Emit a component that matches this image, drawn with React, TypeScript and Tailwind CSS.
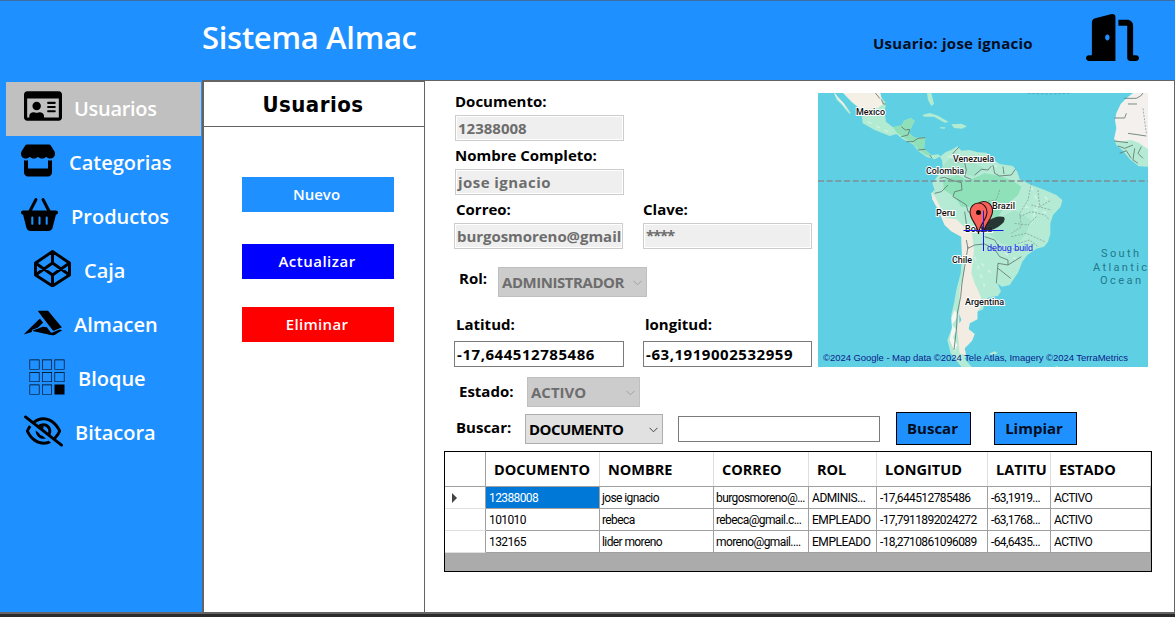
import type { ReactNode } from "react";
import { FaAccusoft, FaBuromobelexperte, FaRegIdCard } from "react-icons/fa";
import { FaBasketShopping, FaDoorOpen, FaRegEyeSlash, FaStore } from "react-icons/fa6";

const ui = "font-['Open_Sans','Noto_Sans',sans-serif] font-bold";

function CodepenCube({ className }: { className: string }) {
  return (
    <svg viewBox="0 0 37 37" className={className} fill="none" stroke="currentColor" strokeWidth="2.9" strokeLinejoin="round">
      <path d="M18.500 1.500 35.500 13V25L18.500 36 1.500 25V13ZM1.500 13 18.500 25 35.500 13M1.500 25 18.500 13 35.500 25M18.500 1.500V13M18.500 25V36" />
    </svg>
  );
}

function NavItem({ label, icon, active, pad, gap, track = "" }: { label: string; icon: ReactNode; active?: boolean; pad: string; gap: string; track?: string }) {
  return (
    <button className={`ml-[6px] flex h-[54px] w-[195px] items-center ${pad} ${gap} ${active ? "bg-[#c0c0c0]" : ""}`}>
      <span className="shrink-0 text-black">{icon}</span>
      <span className={`text-[20px] leading-[28px] font-semibold whitespace-nowrap text-white ${track}`}>{label}</span>
    </button>
  );
}

function Label({ children, className = "" }: { children: ReactNode; className?: string }) {
  return <label className={`block text-[15px] leading-[20px] whitespace-nowrap text-black ${className}`}>{children}</label>;
}

function Box({ children, disabled, className = "" }: { children?: ReactNode; disabled?: boolean; className?: string }) {
  return (
    <div className={`flex h-[26px] items-center overflow-hidden border whitespace-nowrap ${disabled ? "border-[#cccccc] bg-[#efefef] text-[#6d6d6d] shadow-[inset_0_0_0_1px_#fff]" : "border-[#7a7a7a] bg-white text-black"} pl-[2px] text-[15px] leading-[20px] ${className}`}>
      {children}
    </div>
  );
}

function Select({ children, disabled, className = "" }: { children: ReactNode; disabled?: boolean; className?: string }) {
  return (
    <div className={`flex h-[30px] items-center justify-between border pr-[4px] pl-[3px] text-[15px] whitespace-nowrap ${disabled ? "border-[#bfbfbf] bg-[#cccccc] text-[#6d6d6d]" : "border-[#adadad] bg-[#e1e1e1] text-black"} ${className}`}>
      <span>{children}</span>
      <svg width="9" height="6" viewBox="0 0 9 6" fill="none" stroke={disabled ? "#a0a0a0" : "#444"} className="mt-[2px]">
        <path d="M.5 .8 4.5 4.8 8.5 .8" />
      </svg>
    </div>
  );
}

const halo = { paintOrder: "stroke" as const };

function Place({ x, y, w, children }: { x: number; y: number; w: number; children: string }) {
  return (
    <text x={x} y={y} textLength={w} lengthAdjust="spacingAndGlyphs" style={halo} className="fill-[#111] stroke-white stroke-[2px] font-[Roboto,sans-serif] text-[9.5px] font-medium">
      {children}
    </text>
  );
}

function WorldMap() {
  return (
    <svg width="330" height="274" viewBox="0 0 330 274" className="block shrink-0 bg-[#5fd0e3] font-normal">
      <g transform="translate(0 -3) scale(.33333)">
        <path fill="#b0ebd2" d="M50 9 60 22 76 38 86 55 98 68 95 72 84 61 72 45 56 29 48 9Z M75 9 100 36 130 60 134 100 170 120 215 138 235 132 255 148 285 163 300 182 325 200 350 208 365 200 372 210 376 205 360 193 340 196 318 176 322 143 290 143 272 128 290 92 278 84 258 92 252 106 225 112 204 95 200 68 204 40 190 22 188 9Z M327 9 340 9 348 42 340 48 330 30Z M314 74 336 69 360 77 392 96 380 98 348 80 318 80Z M400 103 430 101 447 109 432 116 408 114Z M366 112 382 112 380 116 366 115Z" />
        <path fill="#f4f0e6" d="M50 9 60 22 76 38 96 66 84 55 62 31 50 14Z M76 9 105 38 130 58 180 54 196 42 186 9Z" />
        <path fill="#8fe0b8" d="M225 112 252 106 258 92 278 84 290 92 272 128 290 143 322 143 318 176 340 196 325 196 300 178 285 160 255 142 237 128Z" />
        <path fill="#b5ebd5" d="M372 210 368 198 385 185 400 180 418 169 430 182 455 180 480 187 505 188 520 205 545 222 585 228 598 245 605 268 640 285 680 300 715 315 733 330 728 350 705 375 697 400 697 432 690 455 678 470 655 476 628 495 613 515 600 548 575 585 552 590 538 580 549 604 540 618 512 622 500 635 495 658 478 665 478 688 455 700 452 718 470 732 462 752 440 775 445 798 440 806 462 832 430 830 398 790 388 750 402 715 400 675 408 640 415 600 428 550 432 500 430 440 400 424 380 405 362 362 343 328 340 308 350 300 343 280 365 250 374 230Z" />
        <path fill="#8ee1b9" d="M375 270 420 255 450 272 500 250 545 258 580 270 610 290 600 315 560 350 540 380 515 385 470 350 430 350 410 320 378 300Z" />
        <path fill="#a6e5cb" d="M372 230 395 205 430 215 470 220 500 235 470 260 430 250 390 265Z M500 400 540 385 590 360 640 390 625 430 590 470 550 460 510 430Z" />
        <path fill="#f3ece2" d="M340 308 350 318 364 345 384 384 415 388 438 410 462 430 468 480 460 550 470 580 482 605 495 640 478 665 478 688 455 700 452 718 470 732 462 752 440 775 444 796 425 790 418 720 425 650 425 600 440 540 432 500 430 440 400 424 380 405 362 362 343 328Z" />
        <path fill="#f7f7f2" d="M410 660 420 674 414 688 402 704 415 720 405 742 418 765 410 784 395 750 402 712 400 684Z" />
        <path fill="#b5ebd5" d="M513 791 530 784 539 789 525 796Z M710 826 722 830 718 832Z M990 230 962 229 935 207 913 181 895 165 889 150 990 145Z" />
        <path fill="#f4f0ed" d="M990 9 945 9 925 25 908 42 895 70 891 90 895 115 888 148 905 155 940 150 965 160 990 178Z" />
        <path fill="#5fd0e3" d="M424 672 430 690 424 700Z" />
        <g fill="none" stroke="#fff" strokeWidth="5" opacity=".35" strokeDasharray="12 16">
          <path d="M390 200 440 200 500 215 560 240 M380 240 430 245M640 290 660 340 640 400M680 320 700 340M560 490 600 510M490 520 530 560M470 500 500 590M150 95 215 128M620 350 690 370" />
        </g>
        <g fill="none" stroke="#5c716b" strokeWidth="2.400">
          <path d="M405 190 422 172M405 190 410 215 440 218 445 240 440 260 460 268M470 255 490 238 510 240 520 228M525 225 530 250 545 258 580 255 592 238M555 230 558 252M365 265 380 262 400 270 430 278 432 300 410 305 405 320 430 335M350 310 370 305 390 285M430 335 445 345 450 365 480 372M440 365 445 400 450 425M250 110 262 120 275 118 270 135 250 140M265 155 285 155 300 145 322 143M300 180 322 178M335 195 342 205M190 28 196 42 204 42M172 9 186 26" />
          <path d="M445 450 450 475 470 465 500 462 530 478 545 500 570 510 570 525 540 520 535 580M500 440 530 450 545 475M540 535 578 565M570 525 610 500M450 470 440 530 432 580 428 620 418 670 415 720 408 780" />
          <path d="M919 25 955 25 968 18 975 9M930 42 957 42M889 84 920 84 925 70M930 130 985 138M889 153 930 158M900 168 920 175 945 165M905 190 925 182 940 205M950 175 945 210 960 220M970 170 960 190 975 205" />
        </g>
        <g fill="none" stroke="#839f95" strokeWidth="2.4" strokeDasharray="6 4">
          <path d="M545 300 535 330 500 335M605 380 640 365 680 375 695 390M640 280 630 330 605 370 610 410 580 430M660 300 665 350 700 330M640 345 700 360M590 400 630 405 655 380M580 440 625 430 680 455M600 460 635 450 660 470M575 475 610 480M975 55 985 130" />
        </g>
        <path d="M0 273H990" stroke="#7c8f95" strokeWidth="4" strokeDasharray="18 8" />
        <path d="M630 10q60 4 128-1" stroke="#4fa9bb" strokeWidth="3" fill="none" strokeDasharray="8 5" />
      </g>
      <Place x={38} y={21.5} w={29}>Mexico</Place>
      <Place x={135} y={68.5} w={41}>Venezuela</Place>
      <Place x={108} y={80.5} w={38}>Colombia</Place>
      <Place x={174} y={115.5} w={23}>Brazil</Place>
      <Place x={118} y={122.5} w={19}>Peru</Place>
      <Place x={147} y={139} w={27}>Bolivia</Place>
      <Place x={134} y={170} w={20}>Chile</Place>
      <Place x={147} y={212} w={39}>Argentina</Place>
      <path d="M162 139 170 128Q178 122 186 124 189 128 180 134 172 139 162 139Z" fill="#182322" opacity=".9" />
      <g fill="#f8625b" stroke="#2b1210" strokeWidth="1.1">
        <path d="M165.500 140C165.500 130 157 126 157 117.500a8.800 9 0 0 1 17.600 0C174.600 126 167 130 165.500 140Z" />
        <path d="M160.500 141C159.500 131 152 127 152 119a8.500 9 0 0 1 17 0C169 127 161.500 131 160.500 141Z" />
      </g>
      <circle cx="160.500" cy="119.500" r="2.500" fill="#1b0806" />
      <path d="M165.500 117.500V158M145.500 137.500H185.500" stroke="#1b16e8" fill="none" />
      <text x="169" y="158" textLength="46" className="fill-[#2020ee] font-['Liberation_Sans',sans-serif] text-[9px]">debug build</text>
      <g className="fill-[#23778a] font-[Roboto,sans-serif] text-[11px]">
        <text x="283" y="164" textLength="38">South</text>
        <text x="275" y="178" textLength="54">Atlantic</text>
        <text x="282" y="191" textLength="41">Ocean</text>
      </g>
      <text x="5" y="268" textLength="305" className="fill-[#0b1c8c] font-['Liberation_Sans',sans-serif] text-[9.5px]">©2024 Google - Map data ©2024 Tele Atlas, Imagery ©2024 TerraMetrics</text>
    </svg>
  );
}

const columns = ["DOCUMENTO", "NOMBRE", "CORREO", "ROL", "LONGITUD", "LATITU", "ESTADO"];
const rows = [
  ["12388008", "jose ignacio", "burgosmoreno@...", "ADMINIS...", "-17,644512785486", "-63,1919...", "ACTIVO"],
  ["101010", "rebeca", "rebeca@gmail.c...", "EMPLEADO", "-17,7911892024272", "-63,1768...", "ACTIVO"],
  ["132165", "lider moreno", "moreno@gmail....", "EMPLEADO", "-18,2710861096089", "-64,6435...", "ACTIVO"],
];
const grid = "grid grid-cols-[41px_114px_114px_95px_68px_111px_63px_100px]";

function UserTable() {
  return (
    <div className="ml-[19px] h-[121px] w-[708px] border border-black bg-[#ababab]">
      <div className={`${grid} h-[35px] border-b border-[#a0a0a0] bg-white`}>
        <div className="border-r border-[#a0a0a0]" />
        {columns.map((c) => (
          <div key={c} className="flex items-center overflow-hidden border-r border-[#dedede] pt-px pl-[8px] text-[14.5px] whitespace-nowrap">
            {c}
          </div>
        ))}
      </div>
      {rows.map((r, i) => (
        <div key={r[0]} className={`${grid} h-[22px] grid-rows-[22px] bg-white font-[Roboto,sans-serif] text-[12px] leading-[18px] font-normal tracking-[-0.6px] text-black`}>
          <div className="flex items-center border-r border-b border-r-[#a0a0a0] border-b-[#e0e0e0] pt-px pl-[7px]">
            {i === 0 && (
              <svg width="5" height="10" viewBox="0 0 5 10">
                <path d="M0 0 5 5 0 10Z" fill="#444" />
              </svg>
            )}
          </div>
          {r.map((v, j) => (
            <div key={j} className={`flex items-start border-r border-b border-[#a0a0a0] pt-[2px] whitespace-nowrap ${j === 1 || j === 2 ? "pl-[2px]" : "pl-[3px]"} ${j === 3 ? "tracking-[-0.45px]" : ""} ${i === 0 && j === 0 ? "bg-[#0078d7] text-white" : ""}`}>
              {v}
            </div>
          ))}
        </div>
      ))}
    </div>
  );
}

export default function App() {
  return (
    <div className={`flex h-[617px] w-[1175px] flex-col overflow-hidden bg-[#2b2b2b] ${ui}`}>
      <header className="flex h-[80px] shrink-0 border-t border-[#3c6f9f] bg-[#1e90ff]">
        <h1 className="mt-[14px] ml-[202px] w-[671px] text-[31px] leading-[44px] font-semibold tracking-[-0.3px] whitespace-nowrap text-white">Sistema Almac</h1>
        <p className="mt-[32px] w-[213px] text-[15px] leading-[20px] tracking-[0.27px] whitespace-nowrap text-[#020d20]">Usuario: jose ignacio</p>
        <FaDoorOpen className="mt-[10px] h-[53px] w-[53px] text-black" />
      </header>
      <div className="flex h-[532px] shrink-0">
        <nav className="w-[202px] shrink-0 bg-[#1e90ff] pt-[2px]">
          <NavItem active label="Usuarios" icon={<FaRegIdCard className="-mt-[6px] h-[34px] w-[38px]" />} pad="pl-[18px]" gap="gap-[12px]" track="tracking-[-0.3px]" />
          <NavItem label="Categorias" icon={<FaStore className="-mt-[6px] h-[35px] w-[36px]" />} pad="pl-[14px]" gap="gap-[13px]" />
          <NavItem label="Productos" icon={<FaBasketShopping className="-mt-[5px] h-[37px] w-[37px]" />} pad="pl-[15px]" gap="gap-[13px]" />
          <NavItem label="Caja" icon={<CodepenCube className="-mt-[6px] h-[37px] w-[37px]" />} pad="pl-[28px]" gap="gap-[13px]" />
          <NavItem label="Almacen" icon={<FaAccusoft className="-mt-[5px] h-[38px] w-[38px]" />} pad="pl-[18px]" gap="gap-[12px]" />
          <NavItem label="Bloque" icon={<FaBuromobelexperte className="-mt-[5px] h-[40px] w-[40px]" />} pad="pl-[21px]" gap="gap-[11px]" />
          <NavItem label="Bitacora" icon={<FaRegEyeSlash className="-mt-[5px] h-[38px] w-[39px]" />} pad="pl-[18px]" gap="gap-[12px]" />
        </nav>
        <aside className="flex w-[223px] shrink-0 flex-col border-t-2 border-r border-l-2 border-[#646464] bg-white">
          <h2 className="h-[45px] border-b border-[#646464] pt-[8px] pr-[2px] text-center font-['DejaVu_Sans_Condensed','DejaVu_Sans',sans-serif] text-[22px] leading-[30px] font-bold tracking-[0.5px]">Usuarios</h2>
          <div className="mt-[50px] ml-[38px] flex w-[152px] flex-col text-[15px] font-semibold text-white">
            <button className="h-[35px] bg-[#1e90ff] pr-[3px]">Nuevo</button>
            <button className="mt-[32px] h-[35px] bg-[#0000ff] pr-[2px] tracking-[0.5px]">Actualizar</button>
            <button className="mt-[28px] h-[35px] bg-[#ff0000] pr-[2px] tracking-[0.3px]">Eliminar</button>
          </div>
        </aside>
        <main className="flex w-[750px] flex-col border-t border-r border-[#646464] bg-white">
          <div className="flex h-[331px] shrink-0 pl-[29px]">
            <div className="w-[364px] shrink-0 pt-[10px]">
              <Label className="ml-px">Documento:</Label>
              <Box disabled className="mt-[4px] ml-px w-[169px]">12388008</Box>
              <Label className="mt-[4px] ml-px">Nombre Completo:</Label>
              <Box disabled className="mt-[4px] ml-px w-[169px] tracking-[0.45px]">jose ignacio</Box>
              <div className="mt-[4px] flex gap-[20px]">
                <div className="w-[169px]">
                  <Label className="ml-[2px]">Correo:</Label>
                  <Box disabled className="mt-[4px]"><span className="tracking-[-0.05px]">burgosmoreno@gmail</span></Box>
                </div>
                <div className="w-[169px]">
                  <Label>Clave:</Label>
                  <Box disabled className="mt-[4px] pb-[3px] tracking-[-1.2px]">****</Box>
                </div>
              </div>
              <div className="mt-[18px] flex">
                <Label className="mt-px ml-[5px] w-[39px]">Rol:</Label>
                <Select disabled className="w-[149px] tracking-[-0.45px]">ADMINISTRADOR</Select>
              </div>
              <div className="mt-[17px] flex gap-[19px]">
                <div className="w-[170px]">
                  <Label className="ml-[2px]">Latitud:</Label>
                  <Box className="mt-[7px] tracking-[0.55px]">-17,644512785486</Box>
                </div>
                <div className="w-[169px]">
                  <Label className="ml-[2px]">longitud:</Label>
                  <Box className="mt-[7px] tracking-[0.55px]">-63,1919002532959</Box>
                </div>
              </div>
              <div className="mt-[10px] flex">
                <Label className="mt-[4px] ml-[5px] w-[68px]">Estado:</Label>
                <Select disabled className="w-[113px]">ACTIVO</Select>
              </div>
            </div>
            <div className="pt-[12px]">
              <WorldMap />
            </div>
          </div>
          <div className="flex h-[39px] shrink-0 pl-[31px]">
            <Label className="mt-[5px] w-[69px]">Buscar:</Label>
            <Select className="mt-[2px] w-[138px] tracking-[-0.55px]">DOCUMENTO</Select>
            <Box className="mt-[4px] ml-[15px] w-[202px]" />
            <button className="ml-[16px] h-[33px] w-[75px] border border-black bg-[#1e90ff] pr-[2px] text-[15px] text-[#020d20]">Buscar</button>
            <button className="ml-[23px] h-[33px] w-[83px] border border-black bg-[#1e90ff] pr-[3px] text-[15px] text-[#020d20]">Limpiar</button>
          </div>
          <UserTable />
        </main>
      </div>
      <div className="h-[2px] shrink-0 bg-[#646464]" />
    </div>
  );
}
